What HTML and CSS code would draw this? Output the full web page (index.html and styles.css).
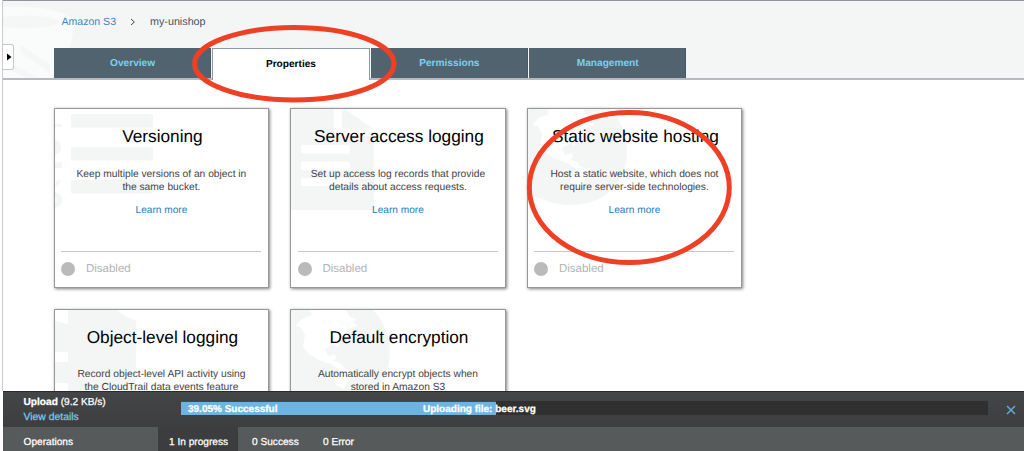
FILE: index.html
```html
<!DOCTYPE html>
<html lang="en">
<head>
<meta charset="utf-8">
<title>my-unishop</title>
<link rel="stylesheet" href="styles.css">
</head>
<body>
<div class="app">
  <main class="content">
    <header class="header">
      <svg class="bucket-art" width="72" height="75" viewBox="0 0 72 75">
        <path d="M0 0H72V75H0Z" fill="#f4f6f6"/>
        <path d="M0 4C35 2 71 8 71 22C68 43 64 58 60 75H0Z" fill="#fafcfb"/>
        <ellipse cx="22" cy="19" rx="34" ry="6.500" fill="#f4f7f6"/>
        <path d="M17 42L47 61V70L19 50ZM0 56L36 75H22L0 62Z" fill="#f4f7f6"/>
      </svg>
      <nav class="breadcrumb">
        <a class="crumb-link">Amazon S3</a>
        <svg class="chevron" width="6" height="8" viewBox="0 0 6 8"><path d="M1 1L4.300 4L1 7" fill="none" stroke="#444" stroke-width="1"/></svg>
        <span class="crumb">my-unishop</span>
      </nav>
      <div class="tabs">
        <div class="tab">Overview</div>
        <div class="tab active">Properties</div>
        <div class="tab">Permissions</div>
        <div class="tab">Management</div>
      </div>
    </header>
    <button class="drawer"><svg width="5" height="8" viewBox="0 0 5 8"><path d="M0 0.500L4.500 4L0 7.500Z" fill="#000"/></svg></button>
    <section class="cards">
      <article class="card">
        <svg class="art" viewBox="0 0 110 110"><g fill="#f4f6f6"><rect x="16" y="5" width="82" height="13.500" rx="1"/><rect x="16" y="38" width="82" height="13.500" rx="1"/><rect x="16" y="71" width="82" height="13.500" rx="1"/><path d="M0 15H7V18H0ZM0 31Q6 32 6 38Q6 44 0 46ZM1 53H7V59H0V55ZM1 72L6 71L3 76L0 79ZM0 83Q7 85 7 91Q7 97 0 99V94Q3 91 0 88Z"/></g></svg>
        <h2>Versioning</h2>
        <p>Keep multiple versions of an object in<br>the same bucket.</p>
        <a class="learn">Learn more</a>
        <div class="status"><i class="dot"></i>Disabled</div>
      </article>
      <article class="card">
        <svg class="art" viewBox="0 0 110 110"><path d="M0 0H43V27H83V101H0ZM51 0H54L81 19H51Z" fill="#f4f6f6"/><g fill="#fff"><rect x="10" y="36" width="49" height="8.500" rx="2"/><rect x="10" y="52.500" width="49" height="8.500" rx="2"/><rect x="10" y="69" width="49" height="8" rx="2"/></g></svg>
        <h2>Server access logging</h2>
        <p>Set up access log records that provide<br>details about access requests.</p>
        <a class="learn">Learn more</a>
        <div class="status"><i class="dot"></i>Disabled</div>
      </article>
      <article class="card">
        <svg class="art" viewBox="0 0 110 110"><path d="M0 0H82Q99 18 99 43Q98 74 73 89Q43 104 8 88L0 83Z" fill="#f4f6f6"/><path d="M4 16L11 9L21 5L19 1L25 0H55L58 6L66 10L62 12L67 16L57 19L54 27L49 31L46 37L42 34L34 39L37 46L44 44L45 49L41 50L49 53L53 58L62 60L58 68L53 79L42 73L48 60L40 54L28 50L18 44L12 37L14 25L10 17Z" fill="#fff"/></svg>
        <h2>Static website hosting</h2>
        <p>Host a static website, which does not<br>require server-side technologies.</p>
        <a class="learn">Learn more</a>
        <div class="status"><i class="dot"></i>Disabled</div>
      </article>
      <article class="card">
        <svg class="art" viewBox="0 0 110 110"><path d="M13 0H62Q71 8 81 10V86H13V73H0V52H13V42H0V11L13 14Z" fill="#f4f6f6"/></svg>
        <h2>Object-level logging</h2>
        <p>Record object-level API activity using<br>the CloudTrail data events feature</p>
      </article>
      <article class="card">
        <svg class="art" viewBox="0 0 110 110"><path d="M0 0H82Q99 18 99 43Q98 74 73 89Q43 104 8 88L0 83Z" fill="#f4f6f6"/><path d="M4 16L11 9L21 5L19 1L25 0H55L58 6L66 10L62 12L67 16L57 19L54 27L49 31L46 37L42 34L34 39L37 46L44 44L45 49L41 50L49 53L53 58L62 60L58 68L53 79L42 73L48 60L40 54L28 50L18 44L12 37L14 25L10 17Z" fill="#fff"/></svg>
        <h2>Default encryption</h2>
        <p>Automatically encrypt objects when<br>stored in Amazon S3</p>
      </article>
    </section>
  </main>
  <footer class="transfer">
    <div class="upload">
      <div class="upload-info">
        <div><b>Upload</b> (9.2 KB/s)</div>
        <a class="details">View details</a>
      </div>
      <div class="track">
        <div class="fill">39.05% Successful</div>
        <span class="file">Uploading file: beer.svg</span>
      </div>
      <svg class="close" width="10" height="10" viewBox="0 0 10 10"><path d="M1 1L9 9M9 1L1 9" stroke="#65a9d6" stroke-width="1.500"/></svg>
    </div>
    <div class="ops">
      <div class="ops-label">Operations</div>
      <div class="op current">1 In progress</div>
      <div class="op">0 Success</div>
      <div class="op">0 Error</div>
    </div>
  </footer>
  <svg class="marks" width="1024" height="451" viewBox="0 0 1024 451">
    <g fill="none" stroke="#ee4024" stroke-width="5">
      <ellipse cx="294.300" cy="63.800" rx="99.700" ry="36.200"/>
      <ellipse cx="629.300" cy="187.500" rx="100" ry="75"/>
    </g>
  </svg>
</div>
</body>
</html>
```
FILE: styles.css
```css
* { box-sizing: border-box; }
body {
  margin: 0;
  background: #fff;
  font-family: "Liberation Sans", Arial, sans-serif;
  font-size: 10.15px;
  text-rendering: geometricPrecision;
}
.app {
  position: relative;
  display: grid;
  grid-template-rows: 391px 60px;
  width: 1024px;
  height: 451px;
  overflow: hidden;
}
.content {
  position: relative;
  margin-left: 2px;
  border-left: 1px solid #c8cbcb;
  overflow: hidden;
}
.header {
  position: relative;
  display: flex;
  flex-direction: column;
  height: 80px;
  padding-left: 51px;
  background: #f4f6f6;
  border-top: 1px solid #92929a;
  border-bottom: 2px solid #b6babf;
}
.bucket-art { position: absolute; left: 0; top: 2px; }
.breadcrumb {
  position: relative;
  display: flex;
  align-items: center;
  height: 47px;
  padding: 0 0 5px 7.5px;
  font-size: 10.55px;
}
.crumb-link { width: 68px; color: #3b86c6; }
.chevron { margin-right: 14.5px; }
.crumb { color: #44535f; font-size: 10.75px; }
.tabs { position: relative; display: flex; height: 30px; }
.tab {
  width: 157.2px;
  margin-right: 1.2px;
  padding: 10px 0 0 1px;
  height: 30px;
  line-height: 12px;
  text-align: center;
  font-weight: bold;
  color: #7cd0f0;
  background: #51636f;
  border-right: 1px solid #465863;
}
.tab.active {
  height: 32px;
  padding-left: 0;
  color: #000;
  background: #fff;
  border: 1px solid #8f9ba3;
  border-bottom: 0;
}
.drawer {
  position: absolute;
  left: -1px;
  top: 44px;
  display: flex;
  align-items: center;
  justify-content: center;
  width: 12px;
  height: 26px;
  padding: 0 0 0 4px;
  background: #fff;
  border: 1px solid #c5c8c8;
  border-left: 0;
  border-radius: 0 3px 3px 0;
}
.cards {
  display: grid;
  grid-template-columns: repeat(3, 215.5px);
  grid-auto-rows: 180px;
  gap: 20.5px 21px;
  padding: 28px 0 0 50.7px;
}
.card {
  position: relative;
  display: flex;
  flex-direction: column;
  align-items: center;
  background: #fff;
  border: 1px solid #959898;
  box-shadow: 1px 1px 3px rgba(0, 0, 0, .5);
}
.art { position: absolute; left: 0; top: 0; width: 110px; height: 110px; }
.card h2 {
  position: relative;
  margin: 16px 0 0 2px;
  font-size: 17.25px;
  line-height: 22px;
  font-weight: normal;
  color: #000;
}
.card p {
  position: relative;
  margin: 20.8px 0 0;
  font-size: 10.25px;
  line-height: 13px;
  color: #444;
  text-align: center;
}
.learn { position: relative; margin-top: 11px; line-height: 12px; color: #2b7cc0; }
.status {
  display: flex;
  align-items: center;
  gap: 10.5px;
  width: 200px;
  height: 36px;
  margin-top: auto;
  padding-bottom: 1px;
  border-top: 1px solid #c6c8c8;
  font-size: 11.5px;
  color: #b2b4b4;
}
.dot { width: 14px; height: 14px; border-radius: 50%; background: #b9bbbb; }
.transfer {
  display: flex;
  flex-direction: column;
  margin-left: 3px;
  color: #fff;
  -webkit-text-stroke: .25px;
}
.upload {
  display: flex;
  height: 36px;
  background: linear-gradient(#444546, #3d3e3f);
  border-top: 1px solid #292a2b;
}
.upload-info {
  width: 178px;
  padding: 3px 0 0 20.5px;
  line-height: 15px;
}
.details { color: #78caec; font-size: 10.4px; }
.track {
  position: relative;
  width: 807px;
  height: 14px;
  margin-top: 9px;
  background: #2f302f;
  font-weight: bold;
}
.fill {
  width: 39.05%;
  height: 14px;
  padding-left: 7px;
  line-height: 15px;
  font-size: 10px;
  background: #6fb3df;
  border-top: 1px solid #55482f;
}
.file { position: absolute; left: 242px; top: 1px; line-height: 15px; font-size: 10px; white-space: nowrap; }
.close { margin: 13px 0 0 18px; }
.ops { display: flex; height: 24px; background: #575a5a; line-height: 31px; }
.ops-label { width: 155px; padding-left: 20.5px; }
.op { padding-left: 14px; width: 71px; }
.op.current { width: 80px; padding-left: 11px; background: #3c3d3e; }
.marks { position: absolute; left: 0; top: 0; pointer-events: none; }
```
